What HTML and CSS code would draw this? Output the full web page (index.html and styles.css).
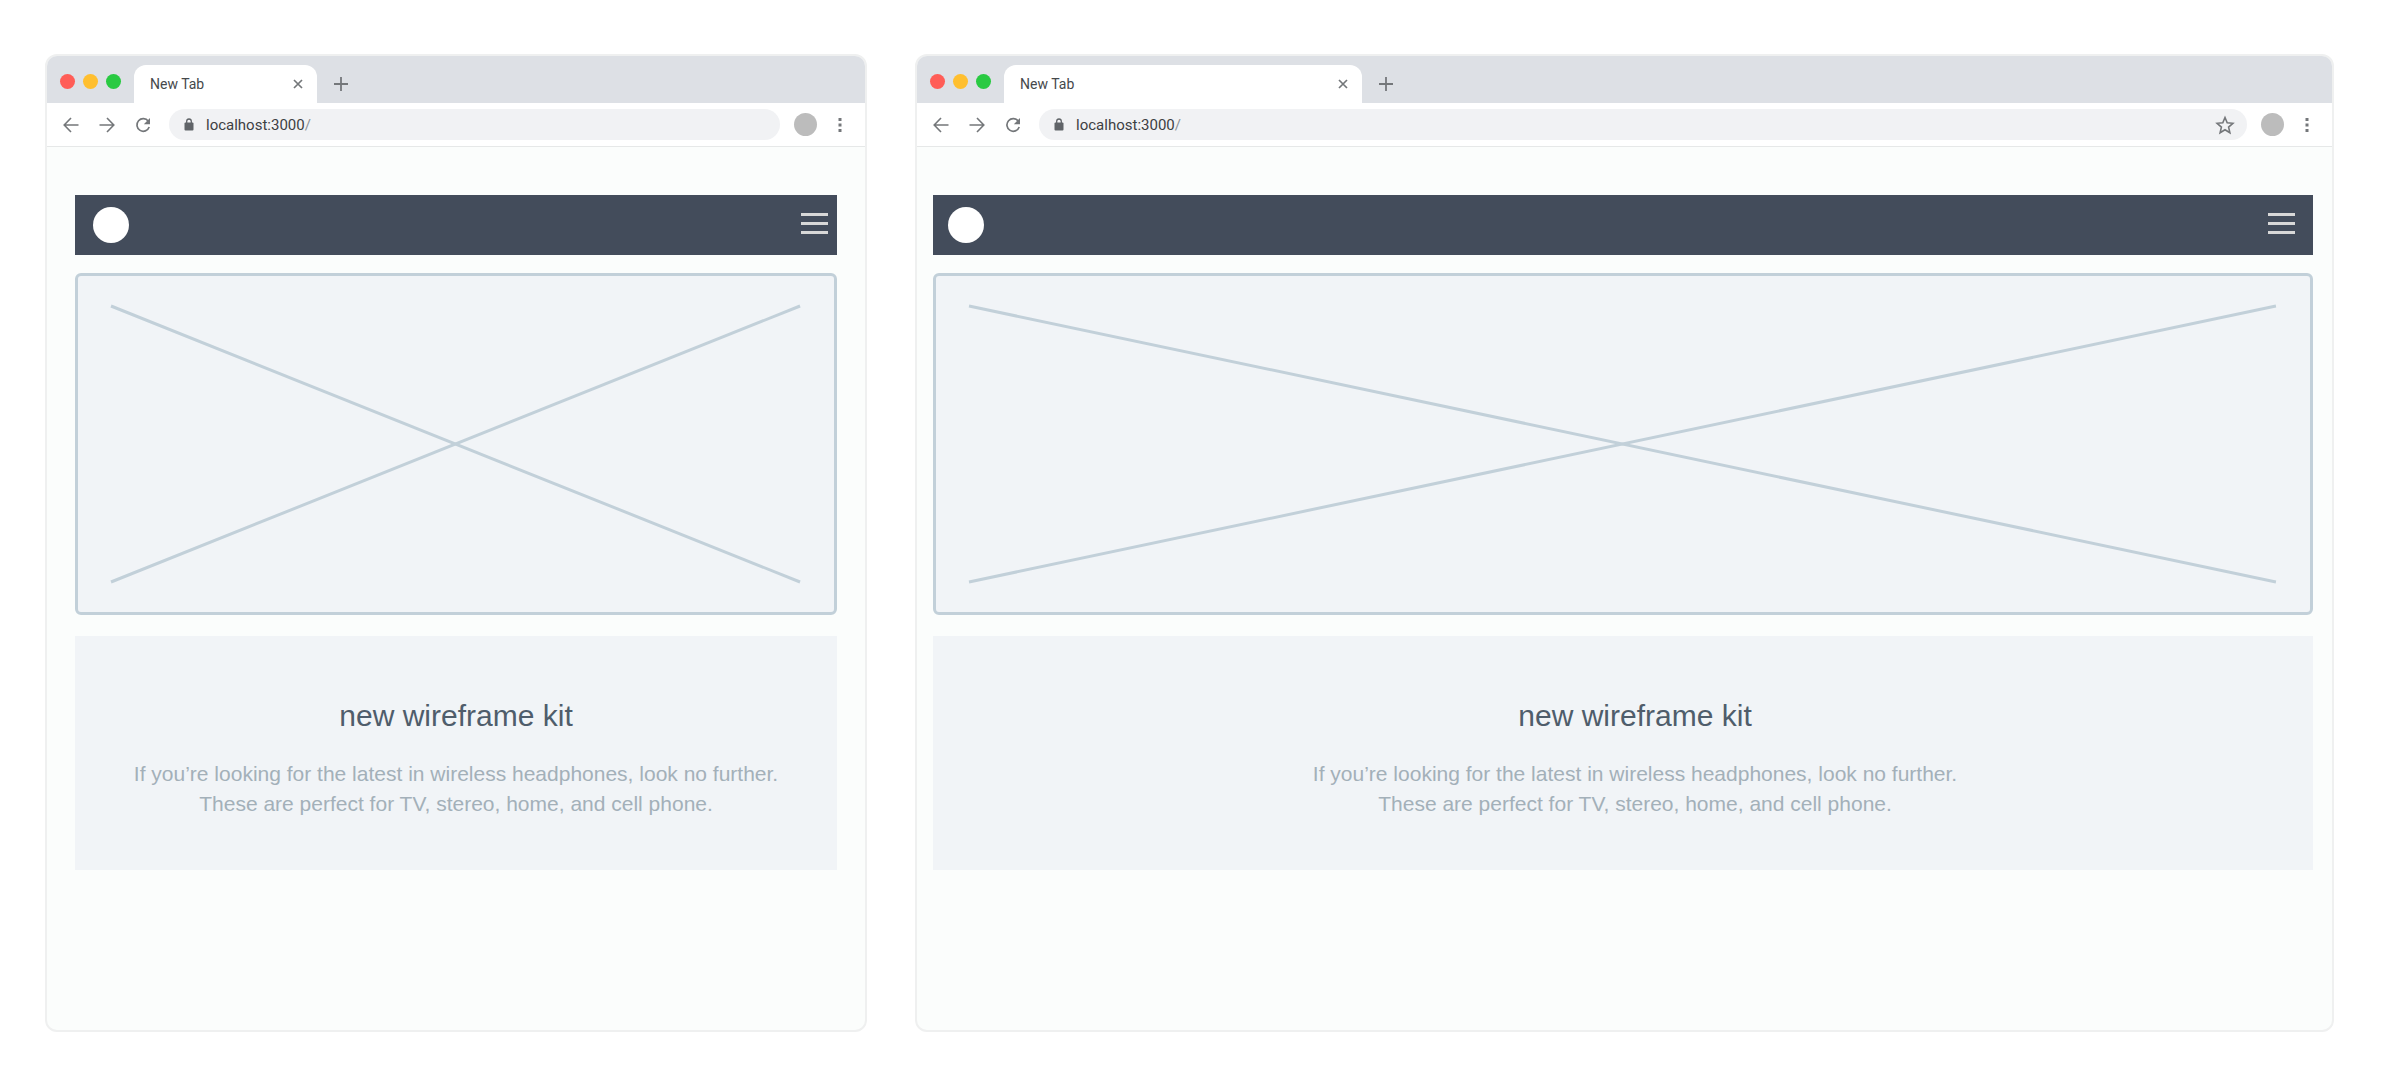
FILE: index.html
```html
<!DOCTYPE html>
<html lang="en">
<head>
<meta charset="utf-8">
<title>new wireframe kit</title>
<link rel="stylesheet" href="styles.css">
</head>
<body>
<svg class="sprite" aria-hidden="true">
  <symbol id="close" viewBox="0 0 10 10"><path d="M1 1l8 8M9 1L1 9" stroke-width="1.7"/></symbol>
  <symbol id="plus" viewBox="0 0 16 16"><path d="M8 1v14M1 8h14" stroke-width="1.800"/></symbol>
  <symbol id="back" viewBox="0 0 16 16"><path d="M15.500 8H1.500M8 1L1.200 8 8 15" stroke-width="1.600"/></symbol>
  <symbol id="forward" viewBox="0 0 16 16"><path d="M.5 8h14M8 1l6.800 7L8 15" stroke-width="1.600"/></symbol>
  <symbol id="reload" viewBox="0 0 16 16"><path d="M13.300 4.200A6.300 6.300 0 1 0 14.200 10" stroke-width="1.700"/><path class="solid" d="M15 1v6.200H8.800z"/></symbol>
  <symbol id="lock" viewBox="0 0 10 13"><rect class="solid" x=".5" y="4.500" width="9" height="8" rx="1"/><path d="M2.700 5V3.300a2.300 2.300 0 0 1 4.600 0V5" stroke-width="1.300"/></symbol>
  <symbol id="star" viewBox="0 0 20 20"><path d="M10 2.500l2.200 5.300 5.700.5-4.300 3.800 1.300 5.600L10 14.700l-4.900 3 1.300-5.600-4.300-3.800 5.700-.5z" stroke-width="1.600"/></symbol>
  <symbol id="more" viewBox="0 0 4 16"><path class="solid" d="M.5 1h3v3h-3zM.5 6.500h3v3h-3zM.5 12h3v3h-3z"/></symbol>
  <symbol id="menu" viewBox="0 0 27 21"><path d="M0 1.500h27M0 10.500h27M0 19.500h27" stroke-width="3"/></symbol>
</svg>

<main class="showcase">
  <section class="window window-narrow" aria-label="Narrow browser">
    <div class="tabs">
      <div class="lights"><i class="light red"></i><i class="light yellow"></i><i class="light green"></i></div>
      <div class="tab"><span>New Tab</span><button class="icon-button" aria-label="Close tab"><svg class="icon close"><use href="#close"/></svg></button></div>
      <button class="icon-button new-tab" aria-label="New tab"><svg class="icon"><use href="#plus"/></svg></button>
    </div>
    <div class="toolbar">
      <div class="history">
        <button class="icon-button" aria-label="Back"><svg class="icon"><use href="#back"/></svg></button>
        <button class="icon-button" aria-label="Forward"><svg class="icon"><use href="#forward"/></svg></button>
        <button class="icon-button" aria-label="Reload"><svg class="icon"><use href="#reload"/></svg></button>
      </div>
      <div class="address"><svg class="icon lock"><use href="#lock"/></svg><span class="url">localhost:3000<span class="slash">/</span></span></div>
      <button class="avatar" aria-label="Profile"></button>
      <button class="icon-button" aria-label="More"><svg class="icon more"><use href="#more"/></svg></button>
    </div>
    <div class="page">
      <header class="navbar">
        <a class="logo" href="#" aria-label="Home"></a>
        <button class="icon-button" aria-label="Menu"><svg class="icon menu"><use href="#menu"/></svg></button>
      </header>
      <div class="placeholder"><svg class="cross"><line x1="0" y1="0" x2="100%" y2="100%"/><line x1="0" y1="100%" x2="100%" y2="0"/></svg></div>
      <article class="intro">
        <h1>new wireframe kit</h1>
        <p>If you’re looking for the latest in wireless headphones, look no further.<br>These are perfect for TV, stereo, home, and cell phone.</p>
      </article>
    </div>
  </section>

  <section class="window window-wide" aria-label="Wide browser">
    <div class="tabs">
      <div class="lights"><i class="light red"></i><i class="light yellow"></i><i class="light green"></i></div>
      <div class="tab"><span>New Tab</span><button class="icon-button" aria-label="Close tab"><svg class="icon close"><use href="#close"/></svg></button></div>
      <button class="icon-button new-tab" aria-label="New tab"><svg class="icon"><use href="#plus"/></svg></button>
    </div>
    <div class="toolbar">
      <div class="history">
        <button class="icon-button" aria-label="Back"><svg class="icon"><use href="#back"/></svg></button>
        <button class="icon-button" aria-label="Forward"><svg class="icon"><use href="#forward"/></svg></button>
        <button class="icon-button" aria-label="Reload"><svg class="icon"><use href="#reload"/></svg></button>
      </div>
      <div class="address"><svg class="icon lock"><use href="#lock"/></svg><span class="url">localhost:3000<span class="slash">/</span></span><button class="icon-button" aria-label="Bookmark"><svg class="icon star"><use href="#star"/></svg></button></div>
      <button class="avatar" aria-label="Profile"></button>
      <button class="icon-button" aria-label="More"><svg class="icon more"><use href="#more"/></svg></button>
    </div>
    <div class="page">
      <header class="navbar">
        <a class="logo" href="#" aria-label="Home"></a>
        <button class="icon-button" aria-label="Menu"><svg class="icon menu"><use href="#menu"/></svg></button>
      </header>
      <div class="placeholder"><svg class="cross"><line x1="0" y1="0" x2="100%" y2="100%"/><line x1="0" y1="100%" x2="100%" y2="0"/></svg></div>
      <article class="intro">
        <h1>new wireframe kit</h1>
        <p>If you’re looking for the latest in wireless headphones, look no further.<br>These are perfect for TV, stereo, home, and cell phone.</p>
      </article>
    </div>
  </section>
</main>
</body>
</html>
```
FILE: styles.css
```css
* { box-sizing: border-box; }

body {
  margin: 0;
  background: #fff;
  font-family: "Liberation Sans", Arial, sans-serif;
}

.sprite { display: none; }

.showcase {
  display: flex;
  gap: 48px;
  min-height: 100vh;
  padding: 54px 66px 33px 45px;
}

.window {
  display: flex;
  flex-direction: column;
  flex-basis: 0;
  min-width: 0;
  border: 2px solid #eff0f0;
  border-radius: 12px;
  overflow: hidden;
  background: #fbfdfc;
}

.window-narrow { flex-grow: 821; }
.window-wide { flex-grow: 1420; }

.tabs {
  display: flex;
  height: 47px;
  padding: 9px 14px 0 13px;
  background: #dde0e5;
  font-family: Roboto, sans-serif;
}

.lights {
  display: flex;
  gap: 8px;
  margin: 9px 13px 0 0;
}

.light {
  width: 15px;
  height: 15px;
  border-radius: 50%;
}

.red { background: #ff5d57; }
.yellow { background: #ffbf2f; }
.green { background: #29ca42; }

.tab {
  display: flex;
  align-items: center;
  justify-content: space-between;
  width: 183px;
  padding: 0 14px 0 16px;
  border-radius: 12px 12px 0 0;
  background: #fff;
  color: #45484b;
  font-size: 14px;
}

.window-wide .tab { width: 358px; }

.icon-button {
  display: flex;
  padding: 0;
  border: 0;
  background: none;
  color: #74777a;
}

.icon {
  width: 16px;
  height: 16px;
  flex: none;
  fill: none;
  stroke: currentColor;
}

.solid {
  fill: currentColor;
  stroke: none;
}

.close { width: 10px; height: 10px; }
.lock { width: 10px; height: 13px; }
.star { width: 20px; height: 20px; }
.more { width: 4px; }
.menu { width: 27px; height: 21px; color: #d8d8d8; }

.new-tab {
  align-items: center;
  margin-left: 16px;
}

.toolbar {
  display: flex;
  align-items: center;
  height: 44px;
  padding: 0 23px 0 16px;
  border-bottom: 1px solid #e6e8e8;
  background: #fff;
}

.history {
  display: flex;
  gap: 20px;
  margin-right: 18px;
}

.address {
  display: flex;
  align-items: center;
  flex: 1;
  height: 31px;
  padding: 0 12px 0 15px;
  border-radius: 16px;
  background: #f1f2f4;
  color: #606468;
  font-family: Roboto, sans-serif;
  font-size: 15px;
}

.url {
  flex: 1;
  margin-left: 12px;
  color: #3d4043;
}

.slash { color: #8b9096; }

.avatar {
  width: 23px;
  height: 23px;
  margin: 0 21px 0 14px;
  padding: 0;
  border: 0;
  border-radius: 50%;
  background: #bcbcbc;
}

.page {
  flex: 1;
  padding: 48px 28px;
}

.window-wide .page { padding: 48px 19px 48px 16px; }

.navbar {
  display: flex;
  align-items: flex-start;
  justify-content: space-between;
  height: 60px;
  padding: 12px 9px 0 18px;
  background: #434c5b;
}

.navbar .icon-button { padding-top: 6px; }

.window-wide .navbar { padding: 12px 18px 0 15px; }

.logo {
  width: 36px;
  height: 36px;
  border-radius: 50%;
  background: #fff;
}

.placeholder {
  display: flex;
  height: 342px;
  margin: 18px 0 21px;
  padding: 30px 34px 30px 33px;
  border: 3px solid #c2d0d9;
  border-radius: 6px;
  background: #f1f4f7;
}

.cross {
  flex: 1;
  overflow: visible;
  stroke: #c2d0d9;
  stroke-width: 3px;
}

.intro {
  padding: 60px 12px 51px;
  background: #f1f4f7;
  text-align: center;
}

.window-wide .intro { padding-left: 36px; }

h1 {
  margin: 0 0 23px;
  color: #4f5d6b;
  font-size: 30px;
  font-weight: 400;
  line-height: 40px;
}

p {
  margin: 0;
  color: #a3b0b9;
  font-size: 21px;
  line-height: 30px;
}
```
